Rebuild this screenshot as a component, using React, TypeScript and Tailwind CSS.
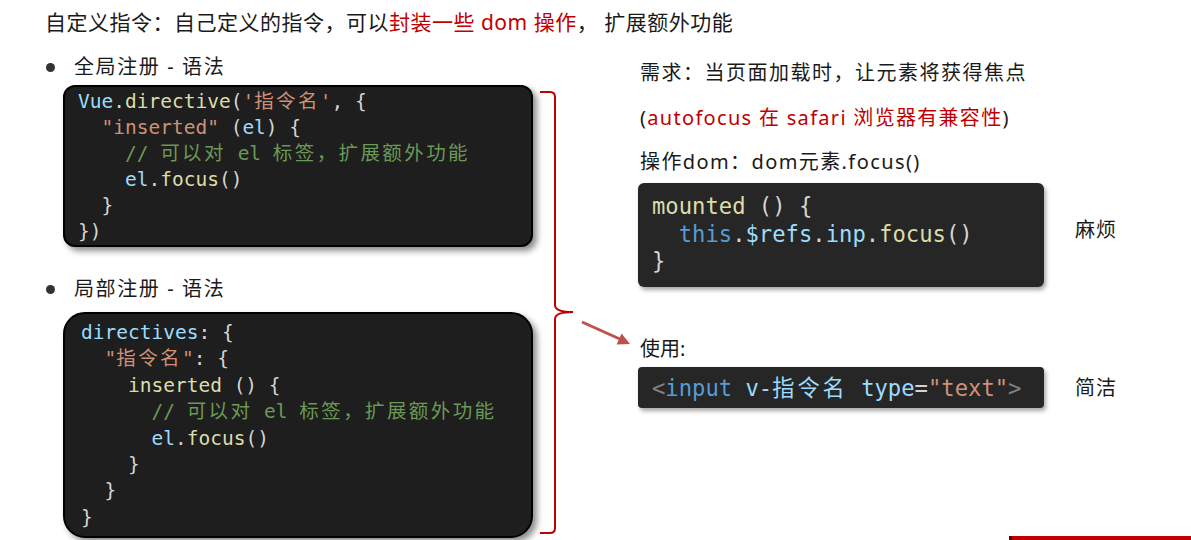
import React from "react";

const W = "text-[#d4d4d4]";
const LB = "text-[#9cdcfe]";
const YE = "text-[#dcdcaa]";
const OR = "text-[#ce9178]";
const GR = "text-[#6a9955]";
const BL = "text-[#569cd6]";
const GY = "text-[#808080]";

const mono = "font-['DejaVu_Sans_Mono','Noto_Sans_CJK_SC',monospace]";

// CJK runs in the code boxes are a bit wider in the original font
const cjk = (text: string, wide = false) =>
  text.split(/([\u3000-\u9fff\uff00-\uffef]+)/).map((part, i) =>
    /[\u3000-\u9fff\uff00-\uffef]/.test(part) ? (
      <span key={i} className={wide ? "tracking-[3px]" : "tracking-[2.4px]"}>
        {part}
      </span>
    ) : (
      part
    )
  );

const Bullet = ({ text }: { text: string }) => (
  <div className="flex items-center h-[26px] text-[20px] leading-[26px]">
    <span className="w-[9px] h-[9px] rounded-full bg-[#333] ml-[1px]" />
    <span className="ml-[19px] tracking-[1.6px]">{text}</span>
  </div>
);

const App = () => {
  return (
    <main className="w-[1191px] h-[540px] overflow-hidden bg-white text-[#1a1a1a] font-['Noto_Sans','Noto_Sans_CJK_SC',sans-serif]">
      {/* title */}
      <div className="pt-[9px] pl-[45px] text-[21px] leading-[26px] tracking-[0.5px] whitespace-pre">
        自定义指令：自己定义的指令，可以<span className="text-[#c00000]">封装一些 dom 操作</span>， 扩展额外功能
      </div>

      <div className="flex">
        {/* left column */}
        <div className="ml-[45px] w-[488px] shrink-0">
          <div className="mt-[19px]">
            <Bullet text="全局注册 - 语法" />
          </div>
          <div
            className={`mt-[5px] ml-[18px] w-[470px] h-[162px] rounded-[12px] border-2 border-black bg-[#1e1e1e] shadow-[4px_4px_6px_rgba(0,0,0,0.45)] pt-[2px] pl-[13px] text-[19.5px] leading-[26px] whitespace-pre ${mono}`}
          >
            <div>
              <span className={LB}>Vue</span>
              <span className={W}>.</span>
              <span className={YE}>directive</span>
              <span className={W}>(</span>
              <span className={OR}>{cjk("'指令名'")}</span>
              <span className={W}>, {"{"}</span>
            </div>
            <div>
              <span className={W}>{"  "}</span>
              <span className={OR}>"inserted"</span>
              <span className={W}> (</span>
              <span className={LB}>el</span>
              <span className={W}>) {"{"}</span>
            </div>
            <div className={GR}>{cjk("    // 可以对 el 标签，扩展额外功能")}</div>
            <div>
              <span className={W}>{"    "}</span>
              <span className={LB}>el</span>
              <span className={W}>.</span>
              <span className={YE}>focus</span>
              <span className={W}>()</span>
            </div>
            <div className={W}>{"  }"}</div>
            <div className={W}>{"})"}</div>
          </div>

          <div className="mt-[29px]">
            <Bullet text="局部注册 - 语法" />
          </div>
          <div
            className={`mt-[10px] ml-[18px] w-[470px] h-[226px] rounded-[22px] border-2 border-black bg-[#1e1e1e] shadow-[4px_4px_6px_rgba(0,0,0,0.45)] pt-[6px] pl-[16px] text-[19.5px] leading-[26.4px] whitespace-pre ${mono}`}
          >
            <div>
              <span className={LB}>directives</span>
              <span className={W}>: {"{"}</span>
            </div>
            <div>
              <span className={W}>{"  "}</span>
              <span className={OR}>{cjk('"指令名"')}</span>
              <span className={W}>: {"{"}</span>
            </div>
            <div>
              <span className={W}>{"    "}</span>
              <span className={YE}>inserted</span>
              <span className={W}> () {"{"}</span>
            </div>
            <div className={GR}>{cjk("      // 可以对 el 标签，扩展额外功能")}</div>
            <div>
              <span className={W}>{"      "}</span>
              <span className={LB}>el</span>
              <span className={W}>.</span>
              <span className={YE}>focus</span>
              <span className={W}>()</span>
            </div>
            <div className={W}>{"    }"}</div>
            <div className={W}>{"  }"}</div>
            <div className={W}>{"}"}</div>
          </div>
        </div>

        {/* brace */}
        <svg className="mt-[53px] ml-[4px] shrink-0" width="39" height="450" viewBox="0 0 39 450">
          <path
            d="M3 4 H13 Q18 4 18 9 V217 Q18 224 36 224 Q18 224 18 231 V440 Q18 445 13 445 H3"
            fill="none"
            stroke="#c00000"
            strokeWidth="2"
          />
        </svg>

        {/* arrow */}
        <svg className="mt-[283px] ml-[2px] shrink-0" width="58" height="30" viewBox="0 0 58 30">
          <line x1="4" y1="4" x2="44" y2="22" stroke="#c0504d" strokeWidth="3" />
          <polygon points="52,26 38.6,26.45 43.6,15.55" fill="#c0504d" />
        </svg>

        {/* right column */}
        <div className="flex-1 ml-[2px] text-[20px] leading-[28px]">
          <div className="mt-[24px] pl-[2px] tracking-[1.5px]">需求：当页面加载时，让元素将获得焦点</div>
          <div className="mt-[17px] pl-[2px] tracking-[1.3px]">
            (<span className="text-[#c00000]">autofocus 在 safari 浏览器有兼容性</span>)
          </div>
          <div className="mt-[16px] pl-[2px] tracking-[1.4px]">操作dom：dom元素.focus()</div>

          <div className="mt-[7px] flex items-center">
            <div
              className={`w-[406px] h-[104px] rounded-[6px] bg-[#262626] shadow-[2px_3px_4px_rgba(0,0,0,0.35)] pt-[10px] pl-[14px] text-[22.2px] leading-[27.5px] whitespace-pre ${mono}`}
            >
              <div>
                <span className={YE}>mounted</span>
                <span className={W}> () {"{"}</span>
              </div>
              <div>
                <span className={W}>{"  "}</span>
                <span className={BL}>this</span>
                <span className={W}>.</span>
                <span className={LB}>$refs</span>
                <span className={W}>.</span>
                <span className={LB}>inp</span>
                <span className={W}>.</span>
                <span className={YE}>focus</span>
                <span className={W}>()</span>
              </div>
              <div className={W}>{"}"}</div>
            </div>
            <span className="ml-[31px] mb-[10px] tracking-[1px]">麻烦</span>
          </div>

          <div className="mt-[48px] pl-[2px]">使用:</div>
          <div className="mt-[4px] flex items-center">
            <div
              className={`w-[406px] h-[41px] rounded-[4px] bg-[#262626] shadow-[2px_3px_4px_rgba(0,0,0,0.35)] pl-[14px] flex items-center text-[22.2px] leading-[28px] whitespace-pre ${mono}`}
            >
              <span className={GY}>&lt;</span>
              <span className={BL}>input</span>
              <span className={LB}> v-{cjk("指令名", true)} type</span>
              <span className={W}>=</span>
              <span className={OR}>"text"</span>
              <span className={GY}>&gt;</span>
            </div>
            <span className="ml-[31px] tracking-[1px]">简洁</span>
          </div>

          {/* footer accent */}
          <div className="mt-[128px] ml-[371px] h-[4px] bg-[#c00000] border-l-[3px] border-[#600000]" />
        </div>
      </div>
    </main>
  );
};

export default App;
